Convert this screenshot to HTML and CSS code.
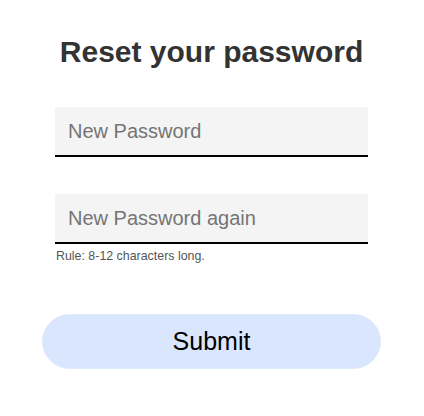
FILE: index.html
```html
<!DOCTYPE html>
<html lang="en">
<head>
<meta charset="utf-8">
<title>Reset your password</title>
<link rel="stylesheet" href="styles.css">
</head>
<body>
<main class="page">
  <h1 class="title">Reset your password</h1>
  <form class="form" onsubmit="return false">
    <div class="field">
      <input class="input" type="password" placeholder="New Password">
    </div>
    <div class="field field-second">
      <input class="input" type="password" placeholder="New Password again">
      <p class="hint">Rule: 8-12 characters long.</p>
    </div>
    <button class="submit" type="submit">Submit</button>
  </form>
</main>
</body>
</html>
```

FILE: styles.css
```css
html, body {
  margin: 0;
  padding: 0;
  background: #ffffff;
}

body {
  font-family: "Liberation Sans", Arial, sans-serif;
}

.page {
  display: flex;
  flex-direction: column;
  align-items: center;
  padding-top: 34px;
  padding-right: 1px;
}

.title {
  margin: 0;
  font-size: 30px;
  line-height: 36px;
  font-weight: 700;
  color: #333333;
}

.form {
  margin-top: 37px;
  display: flex;
  flex-direction: column;
  align-items: center;
}

.field {
  width: 313px;
  display: flex;
  flex-direction: column;
}

.field-second {
  margin-top: 37px;
}

.input {
  box-sizing: border-box;
  width: 100%;
  height: 50px;
  margin: 0;
  padding: 0 13px;
  border: none;
  border-bottom: 2px solid #000000;
  border-radius: 0;
  background: #f4f4f4;
  font-family: "Liberation Sans", Arial, sans-serif;
  font-size: 20px;
  color: #333333;
  outline: none;
}

.input::placeholder {
  color: #757575;
  opacity: 1;
}

.hint {
  margin: 5px 0 0 1px;
  font-size: 12.4px;
  line-height: 14px;
  color: #555555;
}

.submit {
  box-sizing: border-box;
  margin-top: 51px;
  width: 339px;
  height: 55px;
  border: 1px solid #e0eafd;
  border-radius: 28px;
  background: #dae6fe;
  font-family: "Liberation Sans", Arial, sans-serif;
  font-size: 25px;
  color: #000000;
  cursor: pointer;
}
```
